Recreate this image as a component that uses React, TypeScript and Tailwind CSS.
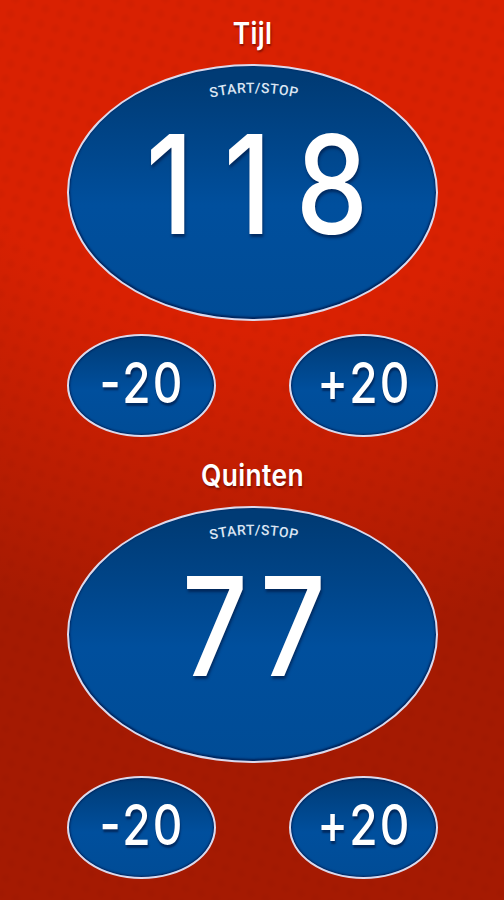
import { useState } from "react";
import clsx from "clsx";

const players = [
  { id: "tijl", name: "Tijl", score: 118 },
  { id: "quinten", name: "Quinten", score: 77 },
];

function Backdrop() {
  return (
    <svg className="absolute inset-0 -z-10 h-full w-full" aria-hidden="true">
      <defs>
        <radialGradient id="dot">
          <stop offset="0.3" stopColor="#700c00" stopOpacity="0.06" />
          <stop offset="1" stopColor="#700c00" stopOpacity="0" />
        </radialGradient>
        <pattern
          id="dots"
          width="15.8"
          height="15.8"
          patternUnits="userSpaceOnUse"
          patternTransform="translate(5.5 4) rotate(18.4)"
        >
          <circle cx="7.9" cy="7.9" r="6" fill="url(#dot)" />
        </pattern>
      </defs>
      <rect width="100%" height="100%" fill="url(#dots)" />
    </svg>
  );
}

function ScoreButton({ id, score }: { id: string; score: number }) {
  return (
    <button className="relative flex h-[257px] w-[371px] shrink-0 items-center justify-center rounded-[50%] border-2 border-[#dcd9ec] bg-linear-to-b from-[#003b75] from-5% via-[#004f9d] via-55% to-[#004c96] shadow-[inset_0_-1px_2px_1px_#00235a]">
      <svg
        className="absolute left-[117px] top-[7px]"
        width="136"
        height="34"
        viewBox="0 0 136 34"
      >
        <path id={`arc-${id}`} d="M 2 31.5 A 190 190 0 0 1 134 31.5" fill="none" />
        <text
          className="fill-[#dbe5f3] font-['Roboto'] text-[14px] font-medium"
          letterSpacing="0.4"
          textAnchor="middle"
        >
          <textPath href={`#arc-${id}`} startOffset="50%">
            START/STOP
          </textPath>
        </text>
      </svg>
      <span className="mb-4 ml-[3px] flex font-['Inter'] text-[137px] leading-none font-medium text-shadow-[1px_3px_3px_rgba(0,20,60,0.6)]">
        {String(score).split("").map((digit, i) => (
          <span
            key={i}
            className={clsx("flex w-[78px] scale-x-[0.84] justify-center", digit === "1" && "pr-[15px]")}
          >
            {digit}
          </span>
        ))}
      </span>
    </button>
  );
}

function StepButton({ label, onClick }: { label: string; onClick: () => void }) {
  return (
    <button
      onClick={onClick}
      className="flex h-[103px] w-[149px] items-center justify-center rounded-[50%] border-2 border-[#dcd9ec] bg-linear-to-b from-[#003b75] via-[#004f9d] via-55% to-[#004c96] pb-[6px] shadow-[inset_0_0_2px_1px_#00235a]"
    >
      <span className="flex font-['Inter'] text-[56px] leading-none font-medium text-shadow-[1px_3px_2px_rgba(0,20,60,0.6)]">
        {label.split("").map((char, i) => (
          <span
            key={i}
            className={clsx(
              "flex scale-x-[0.82] justify-center",
              char === "-" ? "w-[22px]" : "w-[31px]",
              i === 0 && "-mt-px",
            )}
          >
            {char}
          </span>
        ))}
      </span>
    </button>
  );
}

export default function App() {
  const [scores, setScores] = useState(players.map((p) => p.score));

  function change(index: number, amount: number) {
    setScores(scores.map((s, i) => (i === index ? s + amount : s)));
  }

  return (
    <main className="relative isolate h-[900px] w-[504px] overflow-hidden bg-[radial-gradient(circle_at_50%_0,#d92102_330px,#a51a02_650px)] font-['Roboto',sans-serif] text-white">
      <Backdrop />
      {players.map((player, i) => (
        <section key={player.id} className="flex h-[442px] flex-col items-center pt-4">
          <h2 className="h-12 scale-x-[0.88] font-['Inter'] text-[30px] leading-[34px] font-semibold tracking-[0.4px] text-shadow-[1px_2px_2px_rgba(60,0,0,0.5)]">
            {player.name}
          </h2>
          <ScoreButton id={player.id} score={scores[i]} />
          <div className="mt-[13px] flex w-[371px] justify-between">
            <StepButton label="-20" onClick={() => change(i, -20)} />
            <StepButton label="+20" onClick={() => change(i, 20)} />
          </div>
        </section>
      ))}
    </main>
  );
}
